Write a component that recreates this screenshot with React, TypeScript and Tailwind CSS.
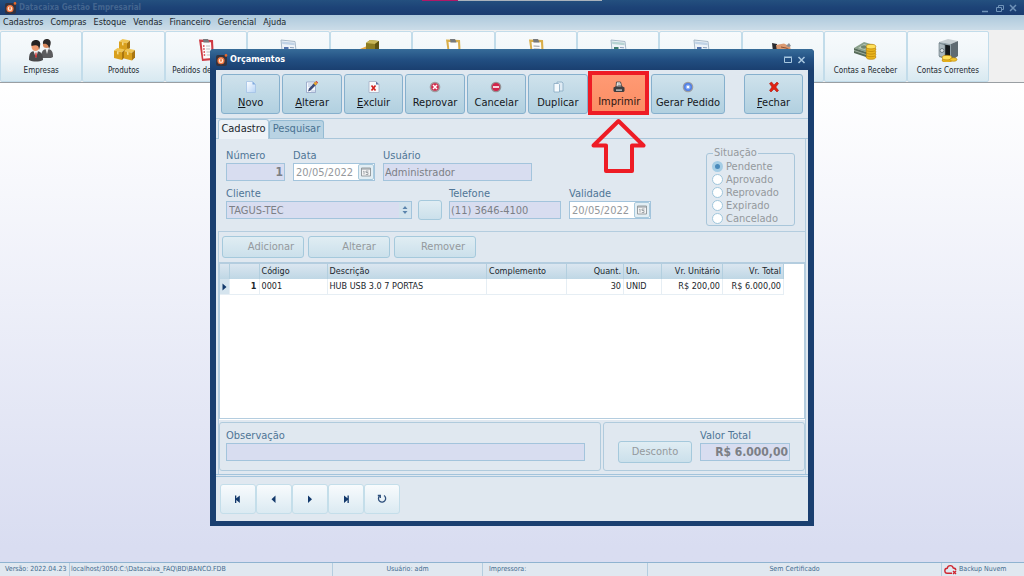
import type { ReactNode } from "react";

const AppLogo = () => (
  <svg viewBox="0 0 12 12" className="size-3 shrink-0" aria-hidden="true">
    <rect x="0" y="1" width="11" height="11" rx="2" fill="#33333f" />
    <circle cx="5" cy="6.7" r="3.6" fill="#f2763f" />
    <circle cx="5" cy="6.7" r="2.300" fill="#ffe3d0" />
    <path d="M5 5v3M4 6.2h2" stroke="#e0622a" strokeWidth="0.8" />
    <circle cx="10" cy="1.4" r="1.3" fill="#e8682c" />
  </svg>
);

const PeopleIcon = () => (
  <svg viewBox="0 0 24 24" className="size-6">
    <path d="M12 20c0-5 1-9 6-9s6 3 6 8l-2 1z" fill="#5c5c5e" />
    <path d="M16.500 11l1.500 5 1.500-5z" fill="#e8e8e8" />
    <circle cx="17.500" cy="6.500" r="3.600" fill="#d98a5e" />
    <path d="M14 6c-.5-4 2-5 4-5s4.500 1.500 3.500 5.500l-1.500 5c0-4-2-6.500-6-5.500z" fill="#2d2a2a" />
    <path d="M0 22c0-6 1-9 6.500-9s7.500 3 7.500 9c-4 2-10 2-14 0z" fill="#4a4a4c" />
    <path d="M4.500 13l2.500 7 2-7z" fill="#f1f1f1" />
    <path d="M6.500 14.500h1l.5 4-1 1.500-1-1.500z" fill="#c33" />
    <ellipse cx="6.500" cy="8.500" rx="4" ry="4.500" fill="#ee9b70" />
    <path d="M2.500 8c-1-4 1.500-6 4.500-6s5 2 4 6l-1 4c0-4.500-2-5.500-7.500-4z" fill="#252323" />
  </svg>
);

const Box = ({ x, y }: { x: number; y: number }) => (
  <g transform={`translate(${x} ${y})`}>
    <path d="M0 2.500L3.500 0 11 1.500 8 4.200z" fill="#f0c552" />
    <path d="M0 2.500L8 4.200V12L0 10z" fill="#d9a01d" />
    <path d="M8 4.200L11 1.500V9L8 12z" fill="#a97610" />
    <path d="M3 3.200l1.500.3v3l-1.500-.3z" fill="#f6dc8a" />
  </g>
);

const BoxesIcon = () => (
  <svg viewBox="0 0 24 24" className="size-6">
    <Box x={7} y={1} />
    <Box x={2} y={10} />
    <Box x={12} y={10.500} />
  </svg>
);

const DarkBoxIcon = () => (
  <svg viewBox="0 0 24 24" className="size-6">
    <path d="M1 11l7-3 6 2-5 4z" fill="#e8a640" />
    <path d="M7 5l4-3 9 1v9l-4 3-9-1z" fill="#8b7b22" />
    <path d="M7 5l4-3 9 1-4 3z" fill="#c9b759" />
    <path d="M16 6l4-3v9l-4 3z" fill="#5d5212" />
  </svg>
);

const ClipboardIcon = ({ color, lines, check }: { color: string; lines?: boolean; check?: boolean }) => (
  <svg viewBox="0 0 24 24" className="size-6">
    <path d="M5 1.500l14 .5 1 20-12 1z" fill={color} />
    <path d="M7.500 4l9.500.3.8 15.700-8.500.7z" fill="#fbfbfb" />
    <path d="M9 1h5l1.500 3.500H9.500z" fill="#77797c" />
    {lines && <path d="M9.500 8l6 .3M9.700 11l6 .2M10 14l6 .1" stroke="#98999d" strokeWidth="1" />}
    {check && (
      <path d="M9 8h1.500M9.200 11h1.500M9.500 14H11M9.700 17h1.500" stroke="#d3343c" strokeWidth="1.500" />
    )}
    {check && <path d="M12 8h4M12.200 11h4M12.500 14h4M12.700 17h4" stroke="#b5b5b9" strokeWidth="0.900" />}
  </svg>
);

const DocumentIcon = ({ green }: { green?: boolean }) => (
  <svg viewBox="0 0 24 24" className="size-6">
    <path d="M5 2l14 1.500 2 18-14 1z" fill="#eef3f8" stroke="#a7b8c8" strokeWidth="1" />
    <path d="M6 3.500l12.500 1.200.2 2.500L6.300 6z" fill={green ? "#b7d3d3" : "#c1d3e6"} />
    <path d="M8 9h4.500v3H8z" fill={green ? "#3f7d6f" : "#5474ac"} />
    <path d="M14 9.500l4 .3M14 12l4 .2M8 15l10 .4" stroke="#8ba0ba" strokeWidth="1" />
  </svg>
);

const HandIcon = () => (
  <svg viewBox="0 0 24 24" className="size-6">
    <path d="M1 5l5 1v7l-4 1z" fill="#2b2b2f" />
    <path d="M5 7l8-1.500 6 3 1 4-5 3-9-2z" fill="#dc9a72" />
    <path d="M10 9l5 1 4 2" stroke="#8c5638" strokeWidth="1" fill="none" />
    <path d="M15 8l3-3 2 3-2 1z" fill="#8a8d92" />
  </svg>
);

const Coins = ({ x, y, rows }: { x: number; y: number; rows: number }) => (
  <g transform={`translate(${x} ${y})`}>
    {Array.from({ length: rows }, (_, i) => (
      <ellipse
        key={i}
        cx="5"
        cy={(rows - i) * 2.6}
        rx="4.800"
        ry="2.300"
        fill={i === rows - 1 ? "#ffe05a" : "#eab51d"}
        stroke="#b98209"
        strokeWidth="0.700"
      />
    ))}
  </g>
);

const MoneyIcon = () => (
  <svg viewBox="0 0 24 24" className="size-6">
    <path d="M1 10l10-6 10 3-8 7z" fill="#8aa08b" />
    <path d="M1 10v5l12 4v-5z" fill="#566b59" />
    <path d="M13 14v5l8-7V7z" fill="#728774" />
    <path d="M5 10l6-4 6 2-5 4z" fill="#b9c8b6" />
    <ellipse cx="11" cy="9" rx="3" ry="1.700" fill="#6e846f" />
    <path d="M1 12.500l12 4" stroke="#b5c3b3" strokeWidth="0.800" />
    <Coins x={13} y={6} rows={5} />
  </svg>
);

const SafeIcon = () => (
  <svg viewBox="0 0 24 24" className="size-6">
    <path d="M3 4l9-3 10 2-7 3z" fill="#c6ced2" />
    <path d="M15 6l7-3v15l-7 5z" fill="#5f6b72" />
    <path d="M3 4l12 2v17L3 19z" fill="#90a0a7" />
    <path d="M8 6.500l6 1V21l-6-2z" fill="#13171a" />
    <path d="M3 5l6 2v13l-6-2z" fill="#aab7bd" stroke="#67757c" strokeWidth="0.600" />
    <circle cx="6" cy="12.500" r="2" fill="#dde4e7" stroke="#56656d" strokeWidth="0.800" />
    <Coins x={6} y={17} rows={2} />
    <g transform="translate(14 18.500)">
      <ellipse cx="3.500" cy="3" rx="3.500" ry="1.800" fill="#f2c52e" stroke="#b98209" strokeWidth="0.600" />
    </g>
  </svg>
);

const modules: { label: string; icon: ReactNode }[] = [
  { label: "Empresas", icon: <PeopleIcon /> },
  { label: "Produtos", icon: <BoxesIcon /> },
  { label: "Pedidos de Vendas", icon: <ClipboardIcon color="#cf3a43" check /> },
  { label: "", icon: <DocumentIcon /> },
  { label: "", icon: <DarkBoxIcon /> },
  { label: "", icon: <ClipboardIcon color="#d9ae4a" /> },
  { label: "", icon: <ClipboardIcon color="#d9ae4a" lines /> },
  { label: "", icon: <DocumentIcon green /> },
  { label: "", icon: <DocumentIcon /> },
  { label: "", icon: <HandIcon /> },
  { label: "Contas a Receber", icon: <MoneyIcon /> },
  { label: "Contas Correntes", icon: <SafeIcon /> },
];

const NewIcon = () => (
  <svg viewBox="0 0 12 12" className="size-3">
    <defs>
      <linearGradient id="page" x1="0" y1="0" x2="1" y2="1">
        <stop offset="0" stopColor="#ffffff" />
        <stop offset="1" stopColor="#b5d3f6" />
      </linearGradient>
    </defs>
    <path d="M1.500.5h6l3 3v8h-9z" fill="url(#page)" stroke="#a3c1e6" strokeWidth="0.800" />
    <path d="M7.500.5v3h3z" fill="#7fa9de" />
  </svg>
);
const EditIcon = () => (
  <svg viewBox="0 0 12 12" className="size-3">
    <path d="M.5 1h9v10.500h-9z" fill="#f6f9fd" stroke="#8f9fc4" strokeWidth="0.800" />
    <path d="M2 3h5M2 5h3M5 10h4" stroke="#a9bbdc" strokeWidth="0.900" />
    <path d="M2 10.500l1-3L9 1l2 2-6.500 6.500z" fill="#3b4a78" />
    <path d="M7.500 2.500L9.500.5l2 2-2 2z" fill="#e5a42c" />
    <path d="M9.500.5l1-.5 1.500 1.500-.5 1z" fill="#d2332c" />
  </svg>
);
const DeleteIcon = () => (
  <svg viewBox="0 0 12 12" className="size-3">
    <path d="M1 .5h7l3 3v8H1z" fill="#f8fafc" stroke="#a5aec4" strokeWidth="0.800" />
    <path d="M8 .5v3h3z" fill="#5d72a4" />
    <path d="M3.500 4.500l4 5M7.500 4.500l-4 5" stroke="#d3211e" strokeWidth="1.700" />
  </svg>
);
const RejectIcon = () => (
  <svg viewBox="0 0 12 12" className="size-3">
    <circle cx="6" cy="6" r="5.300" fill="#a09c9f" />
    <circle cx="6" cy="6" r="3.800" fill="#d5294c" />
    <path d="M4 4l4 4M8 4L4 8" stroke="#fff" strokeWidth="1.500" />
  </svg>
);
const CancelIcon = () => (
  <svg viewBox="0 0 12 12" className="size-3">
    <circle cx="6" cy="6" r="5.300" fill="#959295" />
    <circle cx="6" cy="6" r="3.900" fill="#d3244b" />
    <path d="M3 6h6" stroke="#fff" strokeWidth="1.600" />
  </svg>
);
const CopyIcon = () => (
  <svg viewBox="0 0 12 12" className="size-3">
    <path d="M5 1h5l1 1v8H5z" fill="#dfebf4" stroke="#86a8c2" strokeWidth="0.800" />
    <path d="M2 2.500h4.500l1 1V11H2z" fill="#f5fafd" stroke="#86a8c2" strokeWidth="0.800" />
  </svg>
);
const PrintIcon = () => (
  <svg viewBox="0 0 12 12" className="size-3">
    <path d="M3.500 1h4l1.500 5h-6z" fill="#fff" stroke="#333" strokeWidth="0.800" />
    <path d="M4.500 3h3M4.500 4.500h3.500" stroke="#444" strokeWidth="0.600" />
    <path d="M.5 6.500l2-1h7l2 1V10l-1 1H1.500l-1-1z" fill="#3d3d40" />
    <path d="M3 8.500h6v1.200H3z" fill="#dcdcdc" />
  </svg>
);
const OrderIcon = () => (
  <svg viewBox="0 0 12 12" className="size-3">
    <circle cx="6" cy="6" r="5.300" fill="#9c9da2" />
    <circle cx="6" cy="6" r="4" fill="#4f7fe6" />
    <circle cx="6" cy="6" r="2.500" fill="#88adf5" />
    <circle cx="6" cy="6" r="1.300" fill="#fff" />
  </svg>
);
const CloseIcon = () => (
  <svg viewBox="0 0 12 12" className="size-3">
    <path
      d="M1.500 2.500L3.500 1 6 4l3-3 1.500 1.500L7.800 6 10.500 9.500 9 11 6 8l-3 3-1.500-1.500L4 6z"
      fill="#e02212"
      stroke="#b0170c"
      strokeWidth="0.600"
    />
  </svg>
);

const CalendarIcon = () => (
  <span className="flex w-4 shrink-0 items-center justify-center rounded-[2px] border border-[#a9cadd] bg-[#e3eef4]">
    <svg viewBox="0 0 10 10" className="size-[10px]">
      <path d="M.5 1h9v8h-9z" fill="#f4f4f4" stroke="#8d9499" strokeWidth="0.900" />
      <path d="M.5 2h9" stroke="#8d9499" strokeWidth="1" />
      <path d="M3 4v3.500M2.300 4.500L3 4M7.500 4H5v1.500h2v2H4.800" stroke="#8d9499" strokeWidth="0.800" fill="none" />
    </svg>
  </span>
);

const ActionButton = ({ icon, children }: { icon: ReactNode; children: ReactNode }) => (
  <button
    type="button"
    className="flex h-10 w-full flex-col items-center rounded-[3px] border border-[#86b0cd] bg-linear-to-b from-[#cfe2ec] to-[#b1d0e0] pt-[6px] text-[11px] whitespace-nowrap text-[#15181c]"
  >
    {icon}
    <span className="mt-[3px] leading-[14px]">{children}</span>
  </button>
);

const SoftButton = ({ children, className = "" }: { children?: ReactNode; className?: string }) => (
  <button
    type="button"
    disabled
    className={`rounded-[3px] border border-[#a5c9dc] bg-linear-to-b from-[#e0edf3] to-[#cbe0eb] text-[11px] text-[#94999d] ${className}`}
  >
    {children}
  </button>
);

const Field = ({ id, label, className = "", children }: { id: string; label: string; className?: string; children: ReactNode }) => (
  <div className={`flex flex-col ${className}`}>
    <label htmlFor={id} className="text-[11px] leading-[14px] text-[#4f7596]">
      {label}
    </label>
    {children}
  </div>
);

const inputClass = "h-[18px] w-full min-w-0 border border-[#a3c4dc] bg-[#d8ddf0] px-px text-[#7c7f86]";

const DateInput = ({ id }: { id: string }) => (
  <div className="flex h-[18px] border border-[#a3c4dc] bg-white">
    <input
      id={id}
      disabled
      defaultValue="20/05/2022"
      className="h-full w-full min-w-0 bg-white px-[2px] pt-px text-[11px] text-[#94989c]"
    />
    <CalendarIcon />
  </div>
);

const navPaths: { name: string; d: string }[] = [
  { name: "Primeiro", d: "M3 2.500h1.300v2.800L7.800 2.500v7.500L4.300 7v3H3z" },
  { name: "Anterior", d: "M7.500 2.500v7.500L3.500 6.200z" },
  { name: "Próximo", d: "M4 2.500v7.500L8 6.200z" },
  { name: "Último", d: "M8.800 2.500H7.500v2.800L4 2.500v7.500L7.500 7v3h1.300z" },
];

const navButtonClass =
  "flex h-[30px] w-9 items-center justify-center rounded-[3px] border border-[#c4deea] bg-linear-to-b from-[#f8fbfd] to-[#dbeaf2]";

export default function App() {
  return (
    <div className="relative flex min-h-screen flex-col bg-linear-to-b from-white from-15% to-[#d9ddf1] to-95% font-['DejaVu_Sans_Condensed','DejaVu_Sans',sans-serif] text-[9px] text-[#20262c]">
      <div className="absolute inset-x-0 top-0 flex justify-center">
        <span className="h-px w-9 bg-[#b01867]" />
        <span className="h-px w-36 bg-[#a9b3bd]" />
      </div>
      <header className="flex h-[15px] items-center gap-[2px] bg-linear-to-b from-[#24507f] via-[#1d4377] to-[#1a3c70] px-[5px]">
        <AppLogo />
        <h1 className="flex-1 text-[8px] font-bold text-[#43658f]">Datacaixa Gestão Empresarial</h1>
        <svg viewBox="0 0 40 10" className="h-[10px] w-10" fill="none" stroke="#6f93b8" aria-hidden="true">
          <path d="M3 8.500h6" strokeWidth="1.500" />
          <path d="M17.500 4.500h5v4h-5zM19.500 4V2.500h5v4H23" />
          <path d="M31 2l6 6M37 2l-6 6" strokeWidth="1.500" />
        </svg>
      </header>
      <nav className="flex h-[15px] items-center gap-[7px] bg-linear-to-b from-[#adc9dc] to-[#cbdce8] px-[3px] text-[9px]">
        {["Cadastros", "Compras", "Estoque", "Vendas", "Financeiro", "Gerencial", "Ajuda"].map((m) => (
          <button key={m} type="button">
            {m}
          </button>
        ))}
      </nav>
      <div className="flex h-[53px] border-b border-[#9a9fa3] bg-[#f0f0f0] pt-px pr-[35px]">
        {modules.map((m, i) => (
          <button
            key={i}
            type="button"
            className="flex h-[51px] min-w-0 flex-1 flex-col items-center overflow-hidden rounded-[2px] border border-[#c2dcea] bg-linear-to-b from-[#f7fafc] via-[#f0f6f9] to-[#d8e9f1] pt-[6px] text-[8px] whitespace-nowrap"
          >
            {m.icon}
            <span className="mt-[3px] leading-3">{m.label}</span>
          </button>
        ))}
      </div>

      <main className="flex-1" />

      <div className="absolute inset-x-0 top-[49px] flex justify-center">
        <section className="w-[604px] rounded-t-[4px] border-x-[6px] border-b-[5px] border-[#1a3f70] bg-[#e0e8f0]">
          <div className="-mx-[6px] flex h-[21px] items-center gap-[2px] rounded-t-[4px] bg-linear-to-b from-[#376c99] via-[#224f82] to-[#1a3f70] px-[6px]">
            <AppLogo />
            <h2 className="flex-1 text-[9px] font-bold text-white">Orçamentos</h2>
            <svg viewBox="0 0 24 10" className="mr-px h-[10px] w-6" fill="none" stroke="#a9c8e0" aria-hidden="true">
              <path d="M1.500 2.500h7v5h-7zM1 2h8" />
              <path d="M15.500 2l6 6M21.500 2l-6 6" strokeWidth="1.500" />
            </svg>
          </div>

          <div className="flex border-b border-[#b4cddf] px-[5px] pt-1 pb-1">
            <div className="grid flex-1 grid-cols-7 gap-[2px]">
              <ActionButton icon={<NewIcon />}>
                <u>N</u>ovo
              </ActionButton>
              <ActionButton icon={<EditIcon />}>
                <u>A</u>lterar
              </ActionButton>
              <ActionButton icon={<DeleteIcon />}>
                <u>E</u>xcluir
              </ActionButton>
              <ActionButton icon={<RejectIcon />}>Reprovar</ActionButton>
              <ActionButton icon={<CancelIcon />}>Cancelar</ActionButton>
              <ActionButton icon={<CopyIcon />}>Duplicar</ActionButton>
              <div className="relative">
                <button
                  type="button"
                  className="flex h-10 w-full flex-col items-center bg-linear-to-b from-[#ff9a74] to-[#fb8d63] pt-[7px] text-[11px] text-[#2d1712]"
                >
                  <PrintIcon />
                  <span className="mt-[2px] leading-[14px]">Imprimir</span>
                </button>
                <span className="pointer-events-none absolute -top-[3px] right-0 -bottom-px -left-[2px] border-4 border-[#ee1c25]" />
                <svg viewBox="0 0 56 56" className="pointer-events-none absolute top-[44px] left-0 size-14" aria-hidden="true">
                  <path
                    d="M28.500 3L53.500 27.500H42V53H16V27.500H3.500z"
                    fill="none"
                    stroke="#ee1c25"
                    strokeWidth="4"
                    strokeLinejoin="round"
                  />
                </svg>
              </div>
            </div>
            <div className="ml-[2px] w-[74px]">
              <ActionButton icon={<OrderIcon />}>Gerar Pedido</ActionButton>
            </div>
            <div className="ml-[19px] w-[59px]">
              <ActionButton icon={<CloseIcon />}>
                <u>F</u>echar
              </ActionButton>
            </div>
          </div>

          <div className="flex h-5 items-end border-b border-[#a9c6da] px-[2px]">
            <button
              type="button"
              className="-mb-px h-5 w-[51px] rounded-t-[3px] border border-b-0 border-[#a9c6da] bg-[#edf2f7] text-[11px]"
            >
              Cadastro
            </button>
            <button
              type="button"
              className="h-[18px] w-[55px] rounded-t-[3px] border border-b-0 border-[#94bbd3] bg-[#b9d3e3] text-[11px] text-[#4a7291]"
            >
              Pesquisar
            </button>
          </div>

          <form className="mx-[2px] flex items-start justify-between border-r border-[#b4cddf] pt-[10px] pr-[10px] pb-[5px] pl-2">
            <div className="flex flex-col gap-[6px]">
              <div className="flex gap-2">
                <Field id="numero" label="Número" className="w-[59px]">
                  <input id="numero" disabled defaultValue="1" className={`${inputClass} text-right text-[12px] font-bold`} />
                </Field>
                <Field id="data" label="Data" className="w-[82px]">
                  <DateInput id="data" />
                </Field>
                <Field id="usuario" label="Usuário" className="w-[149px]">
                  <input id="usuario" disabled defaultValue="Administrador" className={`${inputClass} text-[11px]`} />
                </Field>
              </div>
              <div className="flex items-end">
                <Field id="cliente" label="Cliente" className="w-[186px]">
                  <div className="flex h-[18px] border border-[#a3c4dc]">
                    <select
                      id="cliente"
                      disabled
                      className="w-full appearance-none bg-[#d8ddf0] px-[2px] pt-px text-[11px] text-[#7c7f86] opacity-100"
                    >
                      <option>TAGUS-TEC</option>
                    </select>
                    <span className="flex w-3 shrink-0 items-center justify-center bg-[#d2e3ed]">
                      <svg viewBox="0 0 6 8" className="h-2 w-[6px]" fill="#5b84ad">
                        <path d="M3 0l2.500 3h-5zM3 8L.5 5h5z" />
                      </svg>
                    </span>
                  </div>
                </Field>
                <SoftButton className="mx-[6px] -mb-px h-5 w-6" />
                <Field id="telefone" label="Telefone" className="ml-px w-28">
                  <input id="telefone" disabled defaultValue="(11) 3646-4100" className={`${inputClass} text-[11px]`} />
                </Field>
                <Field id="validade" label="Validade" className="ml-2 w-[82px]">
                  <DateInput id="validade" />
                </Field>
              </div>
            </div>
            <fieldset className="h-[77px] w-[89px] rounded-[3px] border border-[#a9c6da] pl-[5px] text-[11px] text-[#94999d]">
              <legend className="ml-px px-px leading-[8px]">Situação</legend>
              <div className="pt-[3px]">
                {["Pendente", "Aprovado", "Reprovado", "Expirado", "Cancelado"].map((s, i) => (
                  <label key={s} className="flex h-[13px] items-center gap-[3px] leading-[13px]">
                    <input
                      type="radio"
                      name="situacao"
                      disabled
                      defaultChecked={i === 0}
                      className="size-[11px] shrink-0 appearance-none rounded-full border border-[#9fc6dc] bg-white checked:border-[3px] checked:border-[#a5cde5] checked:bg-[#4a8abb]"
                    />
                    {s}
                  </label>
                ))}
              </div>
            </fieldset>
          </form>

          <div className="mx-[2px] border-x border-t border-[#b4cddf]">
            <div className="flex h-[30px] gap-1 pt-1 pl-[3px]">
              <SoftButton className="h-[22px] w-[82px] pl-4">Adicionar</SoftButton>
              <SoftButton className="h-[22px] w-[82px] pl-5">Alterar</SoftButton>
              <SoftButton className="h-[22px] w-[82px] pl-4">Remover</SoftButton>
            </div>
            <div className="h-[157px] border border-t-2 border-[#b4cddf] bg-white pr-5">
              <table className="w-full table-fixed border-collapse text-[9px] leading-[15px]">
                <colgroup>
                  <col className="w-[9px]" />
                  <col className="w-[30px]" />
                  <col className="w-[68px]" />
                  <col />
                  <col className="w-20" />
                  <col className="w-[57px]" />
                  <col className="w-[38px]" />
                  <col className="w-[61px]" />
                  <col className="w-[61px]" />
                </colgroup>
                <thead>
                  <tr className="bg-linear-to-b from-[#dbe6f0] to-[#bfd7e5] text-left *:border-r *:border-[#b3cfdf] *:px-[2px] *:font-normal">
                    <th />
                    <th />
                    <th>Código</th>
                    <th>Descrição</th>
                    <th>Complemento</th>
                    <th className="text-right">Quant.</th>
                    <th>Un.</th>
                    <th className="text-right">Vr. Unitário</th>
                    <th className="text-right">Vr. Total</th>
                  </tr>
                </thead>
                <tbody>
                  <tr className="*:border-r *:border-b *:border-[#e6eef4] *:px-[2px] *:whitespace-nowrap">
                    <td className="bg-[#d5e4ee]">
                      <svg viewBox="0 0 5 8" className="mx-auto h-2 w-[5px]" fill="#12386b">
                        <path d="M.5 0.500L4.500 4 .5 7.500z" />
                      </svg>
                    </td>
                    <td className="text-right font-bold">1</td>
                    <td>0001</td>
                    <td>HUB USB 3.0 7 PORTAS</td>
                    <td />
                    <td className="text-right">30</td>
                    <td>UNID</td>
                    <td className="text-right">R$ 200,00</td>
                    <td className="text-right">R$ 6.000,00</td>
                  </tr>
                </tbody>
              </table>
            </div>
            <div className="flex gap-[2px] border-t border-white pt-[2px] pb-[3px]">
              <div className="h-[49px] flex-1 rounded-[3px] border border-[#b0cbdd] pt-[6px] pr-[15px] pl-[6px]">
                <Field id="observacao" label="Observação">
                  <input id="observacao" disabled className={inputClass} />
                </Field>
              </div>
              <div className="flex h-[49px] w-[202px] items-start rounded-[3px] border border-[#b0cbdd] pt-[6px] pl-[14px]">
                <SoftButton className="mt-3 h-[22px] w-[74px]">Desconto</SoftButton>
                <Field id="valor" label="Valor Total" className="ml-2 w-[90px]">
                  <input id="valor" disabled defaultValue="R$ 6.000,00" className={`${inputClass} text-right text-[12px] font-bold`} />
                </Field>
              </div>
            </div>
          </div>

          <div className="flex h-[47px] border-t-[3px] border-double border-[#a3c4dc] pt-[7px] pl-1">
            {navPaths.map((n) => (
              <button key={n.name} type="button" aria-label={n.name} className={navButtonClass}>
                <svg viewBox="0 0 12 12" className="size-3" fill="#12386b">
                  <path d={n.d} />
                </svg>
              </button>
            ))}
            <button type="button" aria-label="Atualizar" className={navButtonClass}>
              <svg viewBox="0 0 12 12" className="size-3" fill="none" stroke="#2e4f7c" strokeWidth="1.300">
                <path d="M8 2.500a3.600 3.600 0 1 1-4.500.500" />
                <path d="M1.800 2.500h2.500V5" />
              </svg>
            </button>
          </div>
        </section>
      </div>

      <footer className="flex h-[14px] items-center border-t border-[#8fb3d0] bg-[#e0e8f0] text-[7px] leading-[13px] text-[#436b8e]">
        <span className="w-[70px] border-r border-[#b4cddf] pl-[5px]">Versão: 2022.04.23</span>
        <span className="w-[263px] border-r border-[#b4cddf] pl-px">localhost/3050:C:\Datacaixa_FAQ\BD\BANCO.FDB</span>
        <span className="w-[150px] border-r border-[#b4cddf] text-center">Usuário: adm</span>
        <span className="w-[165px] border-r border-[#b4cddf] pl-[6px]">Impressora:</span>
        <span className="flex-1 border-r border-[#b4cddf] text-center">Sem Certificado</span>
        <span className="flex w-[82px] items-center gap-[2px] pl-[2px]">
          <svg viewBox="0 0 13 11" className="h-[11px] w-[13px]" fill="none" stroke="#cf2630" strokeWidth="1.400" aria-hidden="true">
            <path d="M8 9.300H3.500a2.500 2.500 0 0 1-.3-5C4 .8 8.500.8 9.300 4c1.500 0 2.500 1 2.500 2.300" />
            <path d="M9 7l3 3M12 7l-3 3" />
          </svg>
          Backup Nuvem
        </span>
      </footer>
    </div>
  );
}
